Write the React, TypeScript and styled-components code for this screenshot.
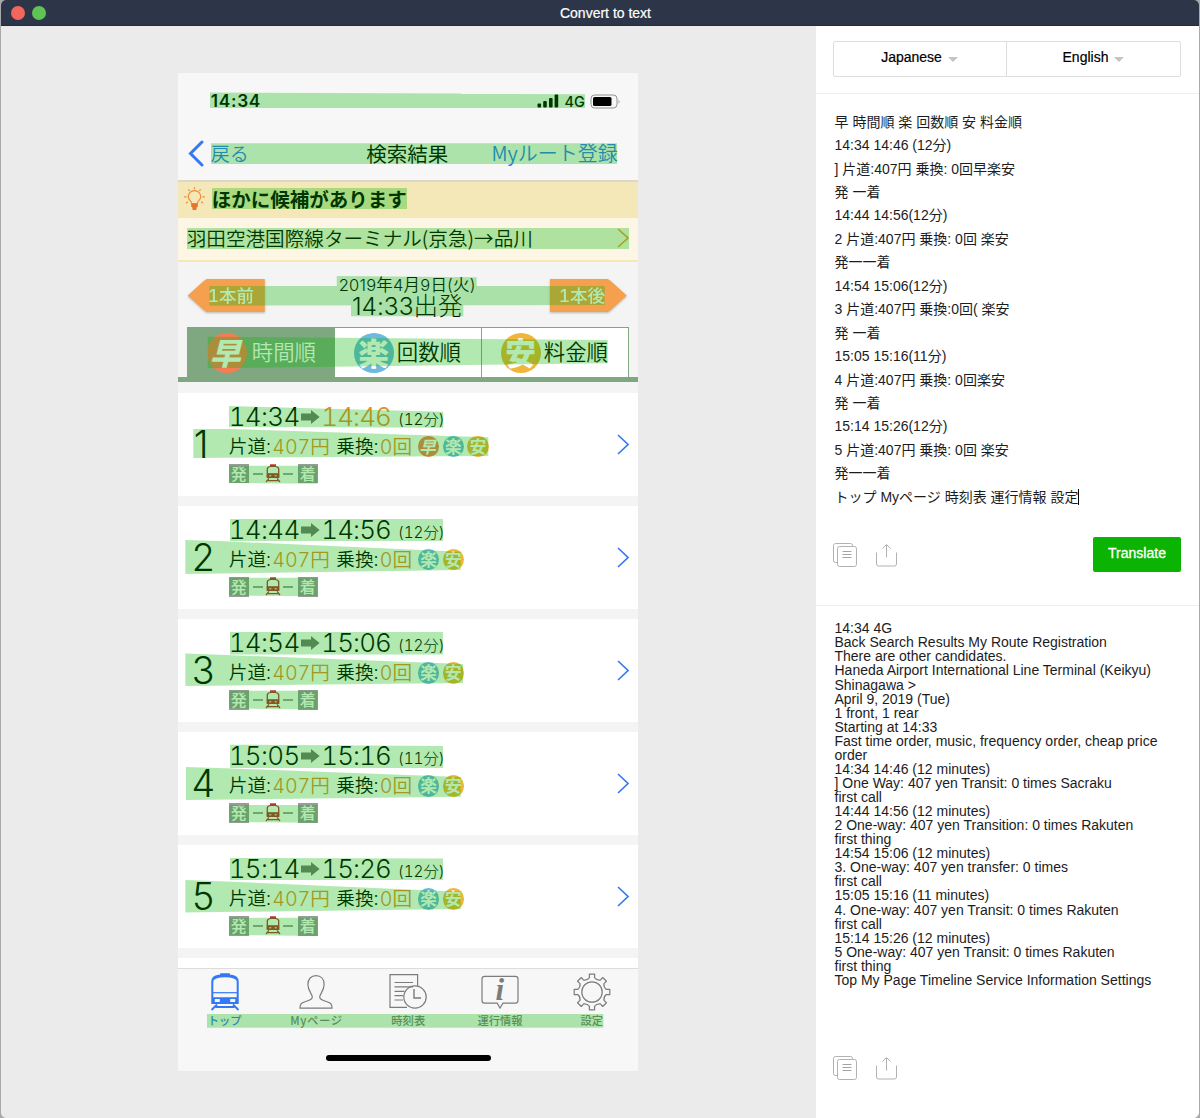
import React from "react";
import styled, { createGlobalStyle, css } from "styled-components";

const JP = `"Noto Sans CJK JP", sans-serif`;
const DIGITS = `Inter, "Noto Sans CJK JP", sans-serif`;
const UI = `"Liberation Sans", "Noto Sans CJK JP", sans-serif`;

const C = {
  blue: "#3478f6",
  orange: "#ec8a2e",
  tab: "#80a880",
  gray: "#f4f4f4",
  bar: "#f7f7f7",
};

const Global = createGlobalStyle`
  *, *::before, *::after { box-sizing: border-box; }
  body { margin: 0; background: #a9a9a9; font-family: ${UI}; }
  svg { display: block; flex: none; }
`;

/* ---------- window ---------- */

const Window = styled.div`
  height: 1118px;
  margin: 0 1px;
  display: flex;
  flex-direction: column;
  overflow: hidden;
  border-radius: 5px 5px 6px 6px;
  background: #fff;
`;

const TitleBar = styled.header`
  height: 26px;
  flex: none;
  display: grid;
  grid-template-columns: 1fr auto 1fr;
  align-items: center;
  background: #2d3549;
  border-bottom: 1px solid #232a3b;
  color: #fff;
  font-size: 14px;
  line-height: 25px;
`;

const Lights = styled.div`
  display: flex;
  gap: 7px;
  padding-left: 9.5px;
`;

const Light = styled.span<{ $color: string }>`
  width: 14px;
  height: 14px;
  border-radius: 50%;
  background: ${(p) => p.$color};
`;

const WindowTitle = styled.span`
  padding: 1px 0 0 11px;
  -webkit-text-stroke: 0.2px #fff;
`;

const Body = styled.div`
  flex: 1;
  min-height: 0;
  display: flex;
`;

const Canvas = styled.section`
  width: 814.5px;
  flex: none;
  display: flex;
  flex-direction: column;
  align-items: center;
  padding: 47px 0 0 0;
  background: #ebebeb;
`;

/* ---------- phone ---------- */

const Phone = styled.div`
  position: relative;
  width: 460px;
  height: 998px;
  margin-left: -1px;
  display: flex;
  flex-direction: column;
  background: ${C.gray};
  font-family: ${JP};
  font-weight: 350;
  color: #000;
  white-space: nowrap;
`;

const StatusBar = styled.div`
  height: 56px;
  flex: none;
  display: flex;
  align-items: center;
  padding: 0 17px 0 33px;
  background: ${C.bar};
  font-family: ${DIGITS};
`;

const Clock = styled.span`
  margin-right: auto;
  font-size: 17.3px;
  font-weight: 600;
  letter-spacing: 0.7px;
  padding-bottom: 1px;
`;

const Network = styled.span`
  margin: 0 5px 0 5px;
  font-size: 14.5px;
  font-weight: 500;
`;

const NavBar = styled.div`
  height: 53px;
  flex: none;
  display: grid;
  grid-template-columns: 178.5px auto 1fr;
  align-items: center;
  padding: 0 20px 3px 10px;
  background: ${C.bar};
  border-bottom: 2px solid #dcd8c8;
  line-height: 30px;
`;

const NavBack = styled.div`
  display: flex;
  align-items: center;
  gap: 7px;
  color: ${C.blue};
  font-size: 19px;
`;

const NavTitle = styled.span`
  font-size: 20.5px;
  font-weight: 400;
`;

const NavAction = styled.span`
  justify-self: end;
  font-size: 20px;
  color: ${C.blue};
`;

const Notice = styled.div`
  height: 36px;
  flex: none;
  display: flex;
  align-items: center;
  gap: 7px;
  padding: 0 0 2px 6px;
  background: #f4e8b8;
  font-size: 19.5px;
  font-weight: 700;
  line-height: 30px;
`;

const StationRow = styled.div`
  height: 44px;
  flex: none;
  display: flex;
  align-items: center;
  justify-content: space-between;
  padding: 0 9px 2px 9px;
  background: #fdf6e4;
  border-bottom: 2px solid #f5e7b8;
  font-size: 19.6px;
  line-height: 30px;
`;

const Departure = styled.div`
  height: 65px;
  flex: none;
  display: grid;
  grid-template-columns: 77px 1fr 77px;
  align-items: center;
  padding: 2px 11px 0 10px;
`;

const When = styled.div`
  display: flex;
  flex-direction: column;
  align-items: center;
  font-family: ${DIGITS};
  font-weight: 300;
  font-feature-settings: "calt" 0;
`;

const WhenDate = styled.span`
  font-size: 16.5px;
  line-height: 20px;
  letter-spacing: 0.2px;
  font-weight: 350;
`;

const WhenTime = styled.span`
  font-size: 24.5px;
  line-height: 22px;
`;

const StepButton = styled.div<{ $dir: "prev" | "next" }>`
  height: 33px;
  filter: drop-shadow(0 1px 1px rgba(0, 0, 0, 0.25));
  &::before {
    content: "";
    display: block;
    height: 33px;
    background: #f5a04e;
    clip-path: ${(p) =>
      p.$dir === "prev"
        ? "polygon(0 50%, 16px 2px, 19px 0, 100% 0, 100% 100%, 19px 100%, 16px 31px)"
        : "polygon(100% 50%, 61px 2px, 58px 0, 0 0, 0 100%, 58px 100%, 61px 31px)"};
  }
`;

const StepLabel = styled.span<{ $dir: "prev" | "next" }>`
  display: block;
  margin-top: -33px;
  position: relative;
  padding-left: ${(p) => (p.$dir === "prev" ? "20px" : "9px")};
  color: #fff;
  font-family: ${DIGITS};
  font-feature-settings: "tnum";
  font-size: 17.5px;
  font-weight: 500;
  line-height: 33px;
`;

const SortTabs = styled.div`
  height: 55px;
  flex: none;
  display: flex;
  padding: 0 9px;
  border-bottom: 5px solid ${C.tab};
`;

const SortTab = styled.div<{ $active?: boolean; $w: number }>`
  width: ${(p) => p.$w}px;
  display: flex;
  align-items: center;
  gap: ${(p) => (p.$active ? 5 : 3)}px;
  padding: 0 0 0 19px;
  border: 1px solid ${C.tab};
  border-bottom: 0;
  border-left-width: ${(p) => (p.$active ? 1 : 0)}px;
  background: ${(p) => (p.$active ? C.tab : "#fff")};
  color: ${(p) => (p.$active ? "#fff" : "#000")};
  font-size: 21.4px;
  line-height: 30px;
`;

const SortLabel = styled.span`
  padding-bottom: 3px;
`;

const marks = { 早: "#f67c54", 楽: "#6fb8de", 安: "#f0b53a" };
type Mark = keyof typeof marks;

const Badge = styled.span<{ $mark: Mark; $size: number }>`
  width: ${(p) => p.$size}px;
  height: ${(p) => p.$size}px;
  flex: none;
  display: flex;
  align-items: center;
  justify-content: center;
  border-radius: 50%;
  background: ${(p) => marks[p.$mark]};
  color: #fff;
  font-size: ${(p) => p.$size * 0.77}px;
  font-weight: ${(p) => (p.$size > 30 ? 900 : 700)};
  line-height: 1;
  padding-bottom: 1px;
  ${(p) => p.$mark === "早" && css`font-style: italic; padding-right: ${p.$size * 0.08}px;`}
`;

const Results = styled.div`
  flex: 1;
  min-height: 0;
  overflow: hidden;
  padding-top: 10.6px;
  display: grid;
  grid-auto-rows: 103px;
  gap: 10.1px;
`;

const Card = styled.article`
  display: grid;
  grid-template-columns: 51px 1fr auto;
  padding-right: 9px;
  background: #fff;
`;

const Rank = styled.div<{ $narrow: boolean }>`
  padding: 30px ${(p) => (p.$narrow ? 4 : 0)}px 0 0;
  text-align: center;
  font-family: ${DIGITS};
  font-size: 37.6px;
  font-weight: 300;
  line-height: 44px;
`;

const Trip = styled.div`
  padding-top: 9.5px;
  display: grid;
  grid-template-rows: 30px 29px 25px;
`;

const Line = styled.div<{ $size: number; $weight: number }>`
  display: flex;
  align-items: center;
  font-family: ${DIGITS};
  font-weight: ${(p) => p.$weight};
  font-size: ${(p) => p.$size}px;
  line-height: 30px;
  font-feature-settings: "tnum", "calt" 0;
`;

const Slot = styled.span<{ $w: number; $hot?: boolean; $size?: number; $ls?: number }>`
  width: ${(p) => p.$w}px;
  flex: none;
  color: ${(p) => (p.$hot ? C.orange : "#000")};
  letter-spacing: ${(p) => p.$ls ?? 0}px;
  ${(p) => p.$size && `font-size: ${p.$size}px;`}
`;

const Minutes = styled.span`
  font-size: 15.3px;
  line-height: 30px;
  padding: 5px 0 0 2px;
`;

const Badges = styled.span`
  display: flex;
  gap: 3.3px;
  font-family: ${JP};
`;

const Stop = styled.span`
  width: 20px;
  height: 19.7px;
  display: flex;
  align-items: center;
  justify-content: center;
  background: #9a9a9a;
  color: #fff;
  font-family: ${JP};
  font-size: 16px;
  font-weight: 500;
  line-height: 19px;
`;

const Dash = styled.span`
  width: 10px;
  height: 2px;
  background: #a0a0a0;
`;

const RouteLine = styled.div`
  display: flex;
  align-items: center;
`;

const TrainBox = styled.span`
  width: 49px;
  display: flex;
  align-items: center;
  justify-content: center;
  gap: 2px;
`;

const Next = styled.div`
  padding-top: 41.5px;
`;

const TabBar = styled.nav`
  height: 103px;
  flex: none;
  display: flex;
  flex-direction: column;
  align-items: center;
  justify-content: space-between;
  padding: 0 0 10px 1px;
  background: ${C.bar};
  border-top: 1px solid #dcdcdc;
`;

const Tabs = styled.div`
  width: 459px;
  display: grid;
  grid-template-columns: repeat(5, 1fr);
  padding-top: 4px;
`;

const Tab = styled.div<{ $active?: boolean; $ls?: number }>`
  display: flex;
  flex-direction: column;
  align-items: center;
  color: ${(p) => (p.$active ? C.blue : "#808080")};
  font-size: 11.3px;
  font-weight: 500;
  line-height: 18px;
  letter-spacing: ${(p) => p.$ls ?? 0}px;
`;

const HomeIndicator = styled.div`
  width: 165px;
  height: 6px;
  border-radius: 3px;
  background: #000;
`;

const Highlights = styled.svg`
  position: absolute;
  inset: 0;
  pointer-events: none;
`;

/* ---------- side panel ---------- */

const Panel = styled.aside`
  flex: 1;
  display: flex;
  flex-direction: column;
  background: #fff;
  color: #1c1c1e;
  font-size: 14px;
`;

const Languages = styled.div`
  height: 68px;
  flex: none;
  padding: 15px 18px 0 17.5px;
  border-bottom: 1px solid #efefef;
`;

const LanguageBox = styled.div`
  height: 36px;
  display: grid;
  grid-template-columns: 173px 1fr;
  border: 1px solid #dedede;
  border-radius: 2px;
`;

const Language = styled.div`
  display: flex;
  align-items: center;
  justify-content: center;
  gap: 6px;
  padding: 0 0 4px 0;
  color: #000;
  line-height: 20px;
  -webkit-text-stroke: 0.2px #000;
  &:first-child { border-right: 1px solid #dedede; padding-right: 1px; }
`;

const Caret = styled.span`
  margin-top: 4px;
  border: 5px solid transparent;
  border-top-color: #c4c4c4;
  border-bottom: 0;
`;

const Pane = styled.div<{ $h?: number; $top: number; $bottom: number }>`
  ${(p) => (p.$h ? `height: ${p.$h}px;` : "flex: 1;")}
  display: flex;
  flex-direction: column;
  justify-content: space-between;
  padding: ${(p) => p.$top}px 18px ${(p) => p.$bottom}px 17.5px;
  border-bottom: ${(p) => (p.$h ? "1px solid #efefef" : "0")};
`;

const TextLines = styled.div<{ $lh: number }>`
  display: grid;
  grid-auto-rows: ${(p) => p.$lh}px;
  line-height: ${(p) => p.$lh}px;
  padding-left: 1.5px;
  white-space: nowrap;
`;

const Cursor = styled.span`
  display: inline-block;
  width: 1px;
  height: 16px;
  vertical-align: -3px;
  background: #000;
`;

const Actions = styled.div`
  display: flex;
  align-items: center;
  gap: 19px;
`;

const Translate = styled.button`
  width: 88px;
  height: 35px;
  margin-left: auto;
  padding: 0 0 3px;
  border: 0;
  border-radius: 2px;
  background: #0bb302;
  color: #fff;
  font: 14px ${UI};
  -webkit-text-stroke: 0.3px #fff;
`;

/* ---------- icons ---------- */

const Chevron = ({ color, w, h, sw, left }: { color: string; w: number; h: number; sw: number; left?: boolean }) => (
  <svg width={w} height={h} fill="none" stroke={color} strokeWidth={sw}>
    <path d={left ? `M${w - 2} 2L2.5 ${h / 2}L${w - 2} ${h - 2}` : `M1 1L${w - 1} ${h / 2}L1 ${h - 1}`} strokeLinecap={left ? "round" : "butt"} />
  </svg>
);

const Signal = () => (
  <svg width="22" height="14" viewBox="0 0 22 14">
    <rect x="0.5" y="9.5" width="3.6" height="4" rx="1" />
    <rect x="6.2" y="7" width="3.6" height="6.5" rx="1" />
    <rect x="12" y="4" width="3.6" height="9.5" rx="1" />
    <rect x="17.6" y="0.6" width="3.6" height="12.9" rx="1" />
  </svg>
);

const Battery = () => (
  <svg width="31" height="15" viewBox="0 0 31 15">
    <rect x="1" y="1" width="26" height="13" rx="3.6" fill="none" stroke="#909090" />
    <rect x="3" y="3" width="18.5" height="9" rx="1.6" />
    <path d="M28.6 5.2Q30.4 7.5 28.6 9.8Z" fill="#909090" />
  </svg>
);

const Bulb = () => (
  <svg width="21" height="24" viewBox="0 0 21 24" fill="none" stroke="#ee8a3c" strokeWidth="1.2">
    <path d="M7.6 16.5C7.6 14 4.3 13.2 4.3 9.8a6.2 6.2 0 0 1 12.4 0C16.7 13.2 13.4 14 13.4 16.5Z" />
    <path d="M7.2 16.4h6.6v3.6h-1l-.5 3h-3.600l-.5-3h-1Z" fill="#e8742a" stroke="none" />
    <path d="M10.5 .2v2M4.400 2.300l1.300 1.600M16.600 2.300l-1.300 1.600M.2 9.800h2.400M18.400 9.800h2.400M2 16l1.900-1.200M19 16l-1.900-1.200" />
  </svg>
);

const Arrow = () => (
  <svg width="19" height="16" viewBox="0 0 19 16" fill="#777">
    <path d="M0 4.6h10V.9L18.6 8 10 15.1v-3.7H0Z" />
  </svg>
);

const SmallTrain = () => (
  <svg width="16" height="19" viewBox="0 0 16 19" fill="none" stroke="#b83030" strokeWidth="1.3">
    <path d="M5 1.2h6" strokeWidth="1.8" />
    <path d="M2.3 13V4.8Q3 2.4 8 2.2q5 .2 5.7 2.6V13Z" />
    <path d="M2.5 9.8h11v3.600h-11z" fill="#b83030" />
    <path d="M4.3 11.8h2M9.7 11.8h2" stroke="#fff" strokeWidth="1" />
    <path d="M4 14.400L1 18M12 14.400l3 3.600M2.500 16.700h11" strokeWidth="1.2" />
  </svg>
);

const TrainIcon = () => (
  <svg width="30" height="38" viewBox="0 0 30 38" fill="none" stroke={C.blue}>
    <path d="M10.5 .8h9v2.5h-9z" fill={C.blue} />
    <path d="M2.3 30V8.5Q2.6 3.3 8.5 2.8h13q5.9 .5 6.2 5.7V30Z" strokeWidth="2" />
    <path d="M3 8Q5 4.2 15 4.2T27 8L26 3.9 21 2.3H9L4 3.9Z" fill={C.blue} stroke="none" />
    <path d="M3 19.7h24" strokeWidth="1.2" />
    <path d="M2.5 24.8h25v5.7h-25z" fill={C.blue} />
    <path d="M4.8 26h5v3h-5zM20.2 26h5v3h-5z" fill="#f7f7f7" stroke="none" />
    <path d="M7 31.5L1.5 37M23 31.5l5.500 5.500M5.500 34h19" strokeWidth="1.8" />
  </svg>
);

const PersonIcon = () => (
  <svg width="34" height="38" viewBox="0 0 34 38" fill="none" stroke="#7c7c7c" strokeWidth="1.2">
    <path d="M1 35.2C1 30.8 2.5 29.8 6 28.7 10 27.4 13.3 26.8 13.3 24 13.3 21 8.9 18 8.9 11.5 8.9 6 12.2 2.6 17 2.6S25.1 6 25.1 11.5C25.1 18 20.7 21 20.7 24 20.7 26.8 24 27.4 28 28.7 31.5 29.8 33 30.8 33 35.2Z" />
  </svg>
);

const ScheduleIcon = () => (
  <svg width="38" height="38" viewBox="0 0 38 38" fill="none" stroke="#7c7c7c" strokeWidth="1.2">
    <path d="M28.6 13V1.7H1v32.600h17" />
    <path d="M5.5 9.5h18.500M5.500 13.800h18.500M5.500 18.300h10M5.500 22.600h8.500M5.500 27h8.500" />
    <circle cx="26" cy="24" r="11.2" />
    <path d="M25 16v9h7" strokeWidth="1.4" />
  </svg>
);

const InfoMark = styled.text`
  font: italic 700 31px "Liberation Serif", serif;
`;

const InfoIcon = () => (
  <svg width="38" height="38" viewBox="0 0 38 38" fill="none" stroke="#7c7c7c" strokeWidth="1.2">
    <path d="M3.5 3.4h31q2.5 0 2.5 2.5v21.700q0 2.500-2.500 2.500H22L19 35l-2.800-4.900H3.500Q1 30.100 1 27.600V5.900Q1 3.400 3.500 3.400Z" />
    <InfoMark x="14.5" y="27" fill="#7c7c7c" stroke="none">i</InfoMark>
  </svg>
);

const polar = (r: number, deg: number) => {
  const a = (deg * Math.PI) / 180;
  return `${(19 + r * Math.sin(a)).toFixed(2)} ${(19 - r * Math.cos(a)).toFixed(2)}`;
};

const gearPath = Array.from({ length: 8 }, (_, i) => {
  const a = i * 45;
  return `${i ? "L" : "M"}${polar(14.6, a - 10)}L${polar(18, a - 8.5)}L${polar(18, a + 8.5)}L${polar(14.6, a + 10)}Q${polar(12.4, a + 22.5)} ${polar(14.6, a + 35)}`;
}).join("") + "Z";

const GearIcon = () => (
  <svg width="38" height="38" viewBox="0 0 38 38" fill="none" stroke="#7c7c7c" strokeWidth="1.2">
    <path d={gearPath} strokeLinejoin="round" />
    <circle cx="19" cy="19" r="10.2" />
  </svg>
);

const CopyIcon = () => (
  <svg width="24" height="24" viewBox="0 0 24 24" fill="none" stroke="#b2b2b2">
    <path d="M4 19.5H2.5q-2 0-2-2V2.5q0-2 2-2h15q2 0 2 2V4" />
    <rect x="4.5" y="3.5" width="19" height="20" rx="2" />
    <path d="M9.5 8.5h9M9.5 11.5h9M9.5 14.5h9" stroke="#a4a4a4" />
  </svg>
);

const ShareIcon = () => (
  <svg width="21" height="24" viewBox="0 0 21 24" fill="none" stroke="#b2b2b2">
    <path d="M.5 9.5v11.5q0 2 2 2h16q2 0 2-2V9.5M10.5 14.5V2M6.5 5.5L10.5 1.5l4 4" />
  </svg>
);

/* ---------- data ---------- */

const regions = [
  "210,92.5 461,93.5 461,94 585,94.3 585,108 210,108",
  "211,143.3 617,143.3 617,164 211,164",
  "212,188 407,188 407,209 212,209",
  "187,228 629,228 629,249 187,249",
  "209.3,286 604.7,286 604.7,305 209.3,305.7",
  "336.8,276 476.7,277.3 476.7,292.3 336.8,291",
  "351,295.7 463.3,294.5 463.3,316.3 351,316.3",
  "207.7,336.7 607.7,340 607.7,363.3 207.7,368.3",
  "229,406 443.3,411.7 443.3,427.7 229,427",
  "193.3,429 229,429 488.3,437.3 488.3,456 193.3,458",
  "229.3,465.7 317.3,465.7 317.3,483.7 229.3,483",
  "230,519 443,519 443,541 230,541",
  "185.3,540 226,541.3 460.7,551.7 460.7,570 185.3,574",
  "229.3,577.7 317.3,577.7 317.3,596.3 229.3,595.5",
  "230,632 443,632 443,654.5 230,654.5",
  "185.3,653.5 226,655 463,664 463,683 185.3,686",
  "229.3,690.7 317.3,690.7 317.3,709.5 229.3,708.5",
  "230,744.7 443,746 443,768 230,768",
  "186,767 226,768.3 460.7,777 460.7,796.7 186,800",
  "229.3,805 317.3,805 317.3,822.7 229.3,822",
  "230,858 443,858.5 443,880 230,880",
  "185.3,880 226,881.5 460.7,891.7 460.7,909 185.3,912.5",
  "229.3,917.7 317.3,917.7 317.3,936 229.3,935",
  "207,1014 603.3,1014 603.3,1027.7 207,1027.7",
];

const trips: { from: string; to: string; min: string; marks: Mark[]; hot?: boolean }[] = [
  { from: "14:34", to: "14:46", min: "(12分)", marks: ["早", "楽", "安"], hot: true },
  { from: "14:44", to: "14:56", min: "(12分)", marks: ["楽", "安"] },
  { from: "14:54", to: "15:06", min: "(12分)", marks: ["楽", "安"] },
  { from: "15:05", to: "15:16", min: "(11分)", marks: ["楽", "安"] },
  { from: "15:14", to: "15:26", min: "(12分)", marks: ["楽", "安"] },
];

const source = [
  "早 時間順 楽 回数順 安 料金順",
  "14:34 14:46 (12分)",
  "] 片道:407円 乗換: 0回早楽安",
  "発 一着",
  "14:44 14:56(12分)",
  "2 片道:407円 乗換: 0回 楽安",
  "発一一着",
  "14:54 15:06(12分)",
  "3 片道:407円 乗換:0回( 楽安",
  "発 一着",
  "15:05 15:16(11分)",
  "4 片道:407円 乗換: 0回楽安",
  "発 一着",
  "15:14 15:26(12分)",
  "5 片道:407円 乗換: 0回 楽安",
  "発一一着",
  "トップ Myページ 時刻表 運行情報 設定",
];

const translated = [
  "14:34 4G",
  "Back Search Results My Route Registration",
  "There are other candidates.",
  "Haneda Airport International Line Terminal (Keikyu)",
  "Shinagawa >",
  "April 9, 2019 (Tue)",
  "1 front, 1 rear",
  "Starting at 14:33",
  "Fast time order, music, frequency order, cheap price",
  "order",
  "14:34 14:46 (12 minutes)",
  "] One Way: 407 yen Transit: 0 times Sacraku",
  "first call",
  "14:44 14:56 (12 minutes)",
  "2 One-way: 407 yen Transition: 0 times Rakuten",
  "first thing",
  "14:54 15:06 (12 minutes)",
  "3. One-way: 407 yen transfer: 0 times",
  "first call",
  "15:05 15:16 (11 minutes)",
  "4. One-way: 407 yen Transit: 0 times Rakuten",
  "first call",
  "15:14 15:26 (12 minutes)",
  "5 One-way: 407 yen Transit: 0 times Rakuten",
  "first thing",
  "Top My Page Timeline Service Information Settings",
];

/* ---------- screen ---------- */

const PhoneScreen = () => (
  <Phone>
    <StatusBar>
      <Clock>14:34</Clock>
      <Signal />
      <Network>4G</Network>
      <Battery />
    </StatusBar>
    <NavBar>
      <NavBack>
        <Chevron color={C.blue} w={16} h={27} sw={3} left />
        戻る
      </NavBack>
      <NavTitle>検索結果</NavTitle>
      <NavAction>Myルート登録</NavAction>
    </NavBar>
    <Notice>
      <Bulb />
      ほかに候補があります
    </Notice>
    <StationRow>
      羽田空港国際線ターミナル(京急)→品川
      <Chevron color="#ec9a2c" w={12} h={20} sw={1.6} />
    </StationRow>
    <Departure>
      <StepButton $dir="prev"><StepLabel $dir="prev">1本前</StepLabel></StepButton>
      <When>
        <WhenDate>2019年4月9日(火)</WhenDate>
        <WhenTime>14:33出発</WhenTime>
      </When>
      <StepButton $dir="next"><StepLabel $dir="next">1本後</StepLabel></StepButton>
    </Departure>
    <SortTabs>
      <SortTab $active $w={148}><Badge $mark="早" $size={40}>早</Badge><SortLabel>時間順</SortLabel></SortTab>
      <SortTab $w={147}><Badge $mark="楽" $size={40}>楽</Badge><SortLabel>回数順</SortLabel></SortTab>
      <SortTab $w={147}><Badge $mark="安" $size={40}>安</Badge><SortLabel>料金順</SortLabel></SortTab>
    </SortTabs>
    <Results>
      {trips.map((t, i) => (
        <Card key={t.from}>
          <Rank $narrow={i === 0}>{i + 1}</Rank>
          <Trip>
            <Line $size={26} $weight={300}>
              <Slot $w={72} $ls={-0.7}>{t.from}</Slot>
              <Arrow />
              <Slot $w={76} $ls={-0.9} $hot={t.hot}>&#8202;{t.to}</Slot>
              <Minutes>{t.min}</Minutes>
            </Line>
            <Line $size={18.7} $weight={350}>
              <Slot $w={43.5}>片道:</Slot>
              <Slot $w={64} $hot $size={19.6}>407円</Slot>
              <Slot $w={43.5}>乗換:</Slot>
              <Slot $w={38} $hot $size={19.6}>0回</Slot>
              <Badges>
                {t.marks.map((m) => <Badge key={m} $mark={m} $size={21.5}>{m}</Badge>)}
              </Badges>
            </Line>
            <RouteLine>
              <Stop>発</Stop>
              <TrainBox><Dash /><SmallTrain /><Dash /></TrainBox>
              <Stop>着</Stop>
            </RouteLine>
          </Trip>
          <Next><Chevron color={C.blue} w={12} h={21} sw={1.6} /></Next>
        </Card>
      ))}
      <Card />
    </Results>
    <TabBar>
      <Tabs>
        <Tab $active><TrainIcon />トップ</Tab>
        <Tab $ls={0.6}><PersonIcon />Myページ</Tab>
        <Tab><ScheduleIcon />時刻表</Tab>
        <Tab><InfoIcon />運行情報</Tab>
        <Tab><GearIcon />設定</Tab>
      </Tabs>
      <HomeIndicator />
    </TabBar>
    <Highlights width="460" height="998" viewBox="178 73 460 998">
      <g opacity="0.3" fill="#00b700">
        {regions.map((p) => <polygon key={p} points={p} />)}
      </g>
    </Highlights>
  </Phone>
);

export default function App() {
  return (
    <Window>
      <Global />
      <TitleBar>
        <Lights>
          <Light $color="#f2675c" />
          <Light $color="#5fc454" />
        </Lights>
        <WindowTitle>Convert to text</WindowTitle>
      </TitleBar>
      <Body>
        <Canvas><PhoneScreen /></Canvas>
        <Panel>
          <Languages>
            <LanguageBox>
              <Language>Japanese<Caret /></Language>
              <Language>English<Caret /></Language>
            </LanguageBox>
          </Languages>
          <Pane $h={512} $top={16.7} $bottom={33}>
            <TextLines $lh={23.44}>
              {source.map((s, i) => (
                <div key={i}>{s}{i === source.length - 1 && <Cursor />}</div>
              ))}
            </TextLines>
            <Actions>
              <CopyIcon />
              <ShareIcon />
              <Translate>Translate</Translate>
            </Actions>
          </Pane>
          <Pane $top={15.3} $bottom={38}>
            <TextLines $lh={14.07}>
              {translated.map((s, i) => <div key={i}>{s}</div>)}
            </TextLines>
            <Actions>
              <CopyIcon />
              <ShareIcon />
            </Actions>
          </Pane>
        </Panel>
      </Body>
    </Window>
  );
}
